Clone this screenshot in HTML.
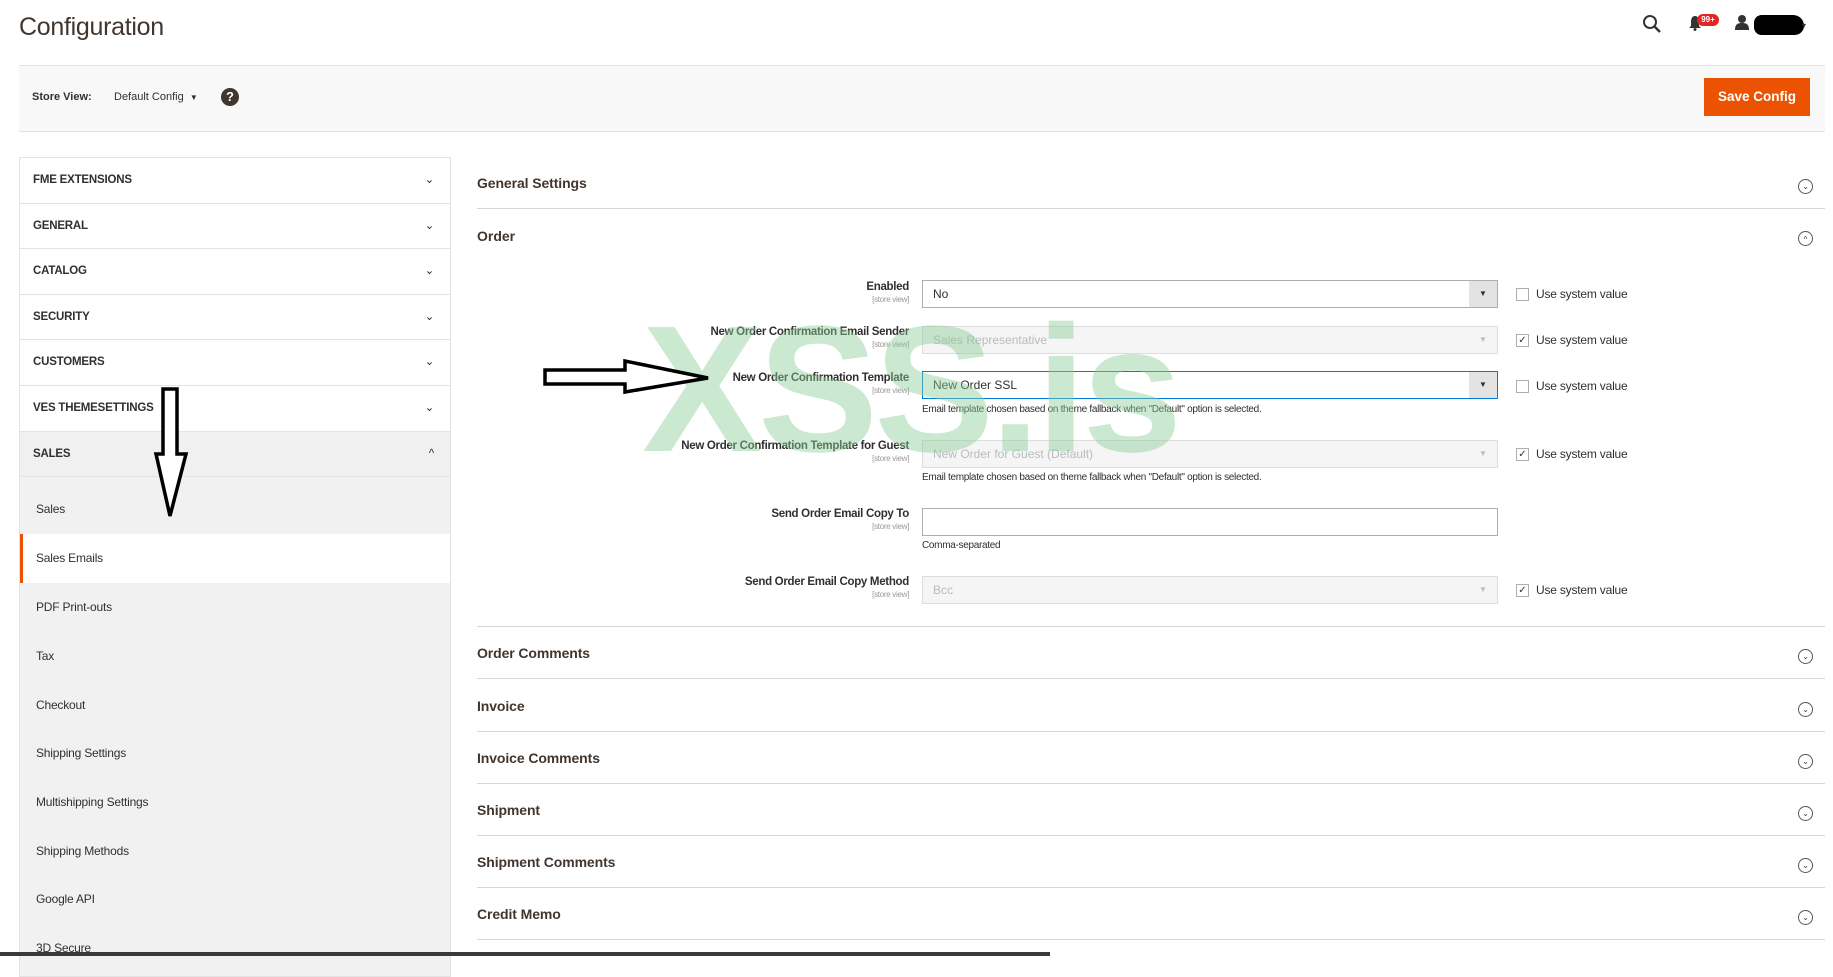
<!DOCTYPE html>
<html><head><meta charset="utf-8">
<style>
*{margin:0;padding:0;box-sizing:border-box}
body{width:1833px;height:956px;overflow:hidden;background:#fff;font-family:"Liberation Sans",sans-serif;color:#303030;position:relative}
.a{position:absolute}
.title{left:19px;top:13px;font-size:25px;color:#41362f;letter-spacing:-0.3px}
.bar{left:19px;top:65px;width:1806px;height:67px;background:#f8f8f8;border-top:1px solid #e3e3e3;border-bottom:1px solid #e3e3e3}
.save{left:1704px;top:78px;width:106px;height:38px;background:#eb5202;color:#fff;font-weight:bold;font-size:13.5px;text-align:center;line-height:38px}
.side{left:19px;top:157px;width:432px;height:820px;border:1px solid #e3e3e3;background:#f1f1f1}
.sh{height:45.6px;border-bottom:1px solid #e3e3e3;font-weight:bold;font-size:11.5px;padding-left:13px;line-height:45px;position:relative;color:#303030;letter-spacing:-0.2px;background:#fff}
.sh .ch{position:absolute;right:16px;top:0;font-weight:normal}
.si{height:48.7px;background:#f1f1f1;font-size:12px;padding-left:16px;line-height:48px;letter-spacing:-0.2px}
.sect{left:477px;width:1348px;border-bottom:1px solid #d6d6d6;height:52px;font-size:14px;font-weight:bold;color:#41362f;padding-top:18px;letter-spacing:-0.1px}
.circ{position:absolute;right:12px;top:22px;width:15px;height:15px;border:1px solid #555;border-radius:50%;font-size:8px;text-align:center;line-height:13px;font-weight:normal}
.lbl{right:924px;text-align:right;font-size:11.5px;font-weight:bold;color:#303030;letter-spacing:-0.3px}
.lbl small{display:block;font-size:8px;font-weight:normal;color:#999;margin-top:2px}
.inp{left:922px;width:576px;height:28px;border:1px solid #adadad;background:#fff;font-size:12px;line-height:26px;padding-left:10px}
.inp.dis{background:#f5f5f5;border-color:#ddd;color:#bbb}
.inp .dd{position:absolute;right:0;top:0;width:28px;height:26px;background:#e3e3e3;text-align:center;font-size:8px;color:#333}
.inp.dis .dd{background:#f5f5f5;color:#bbb}
.cb{left:1516px;width:13px;height:13px;border:1px solid #adadad;background:#fff;font-size:10px;line-height:11px;text-align:center}
.cbl{left:1536px;font-size:12px;letter-spacing:-0.2px}
.note{left:922px;font-size:10px;color:#303030;letter-spacing:-0.3px}
</style></head><body>
<div class="a title">Configuration</div>
<svg class="a" style="left:1642px;top:14px" width="20" height="20"><circle cx="8" cy="8" r="6" fill="none" stroke="#333" stroke-width="2"/><line x1="12" y1="12" x2="18" y2="18" stroke="#333" stroke-width="2.5"/></svg>
<svg class="a" style="left:1688px;top:15px" width="14" height="16"><path d="M7 1C4 1 3 4 3 7L3 11 1 13H13L11 11 11 7C11 4 10 1 7 1Z" fill="#333"/><circle cx="7" cy="14.5" r="1.5" fill="#333"/></svg>
<div class="a" style="left:1697px;top:14px;width:22px;height:12px;background:#e22626;border-radius:6px;color:#fff;font-size:8px;font-weight:bold;text-align:center;line-height:12px">99+</div>
<svg class="a" style="left:1734px;top:14px" width="16" height="16"><circle cx="8" cy="5" r="4" fill="#333"/><path d="M1 16C1 10 4 9 8 9S15 10 15 16Z" fill="#333"/></svg>
<div class="a" style="left:1754px;top:15px;width:50px;height:20px;background:#000;border-radius:10px 14px 12px 10px"></div>
<div class="a" style="left:1802px;top:21px;font-size:8px">▾</div>

<div class="a bar"></div>
<div class="a" style="left:32px;top:91px;font-size:11px;font-weight:bold">Store View:</div>
<div class="a" style="left:114px;top:91px;font-size:11px">Default Config &nbsp;<span style="font-size:8px">▼</span></div>
<div class="a" style="left:221px;top:88px;width:18px;height:18px;border-radius:50%;background:#41362f;color:#fff;font-weight:bold;font-size:13px;text-align:center;line-height:18px">?</div>
<div class="a save">Save Config</div>

<div class="a side">
<div class="sh">FME EXTENSIONS<span class="ch">⌄</span></div>
<div class="sh">GENERAL<span class="ch">⌄</span></div>
<div class="sh">CATALOG<span class="ch">⌄</span></div>
<div class="sh">SECURITY<span class="ch">⌄</span></div>
<div class="sh">CUSTOMERS<span class="ch">⌄</span></div>
<div class="sh">VES THEMESETTINGS<span class="ch">⌄</span></div>
<div class="sh" style="background:#f0f0f0">SALES<span class="ch">^</span></div>
<div class="si" style="height:57px;line-height:64px">Sales</div>
<div class="si" style="background:#fff;border-left:3px solid #eb5202;padding-left:13px;height:49px">Sales Emails</div>
<div class="si">PDF Print-outs</div>
<div class="si">Tax</div>
<div class="si">Checkout</div>
<div class="si">Shipping Settings</div>
<div class="si">Multishipping Settings</div>
<div class="si">Shipping Methods</div>
<div class="si">Google API</div>
<div class="si">3D Secure</div>
</div>
<div class="a" style="left:0;top:952px;width:1050px;height:4px;background:#3a3a3a"></div>

<div class="a sect" style="top:157px">General Settings<span class="circ">⌄</span></div>
<div class="a" style="left:477px;top:228px;font-size:14px;font-weight:bold;color:#41362f">Order</div>
<div class="a" style="left:1798px;top:231px;width:15px;height:15px;border:1px solid #555;border-radius:50%;font-size:8px;text-align:center;line-height:15px">^</div>

<div class="a lbl" style="top:281px">Enabled<small>[store view]</small></div>
<div class="a inp" style="top:280px">No<span class="dd">▼</span></div>
<div class="a cb" style="top:288px"></div><div class="a cbl" style="top:287px">Use system value</div>

<div class="a lbl" style="top:326px">New Order Confirmation Email Sender<small>[store view]</small></div>
<div class="a inp dis" style="top:326px">Sales Representative<span class="dd">▼</span></div>
<div class="a cb" style="top:334px">✓</div><div class="a cbl" style="top:333px">Use system value</div>

<div class="a lbl" style="top:372px">New Order Confirmation Template<small>[store view]</small></div>
<div class="a inp" style="top:371px;border-color:#007bdb">New Order SSL<span class="dd">▼</span></div>
<div class="a cb" style="top:380px"></div><div class="a cbl" style="top:379px">Use system value</div>
<div class="a note" style="top:404px">Email template chosen based on theme fallback when "Default" option is selected.</div>

<div class="a lbl" style="top:440px">New Order Confirmation Template for Guest<small>[store view]</small></div>
<div class="a inp dis" style="top:440px">New Order for Guest (Default)<span class="dd">▼</span></div>
<div class="a cb" style="top:448px">✓</div><div class="a cbl" style="top:447px">Use system value</div>
<div class="a note" style="top:472px">Email template chosen based on theme fallback when "Default" option is selected.</div>

<div class="a lbl" style="top:508px">Send Order Email Copy To<small>[store view]</small></div>
<div class="a inp" style="top:508px"></div>
<div class="a note" style="top:540px">Comma-separated</div>

<div class="a lbl" style="top:576px">Send Order Email Copy Method<small>[store view]</small></div>
<div class="a inp dis" style="top:576px">Bcc<span class="dd">▼</span></div>
<div class="a cb" style="top:584px">✓</div><div class="a cbl" style="top:583px">Use system value</div>

<div class="a" style="left:477px;top:626px;width:1348px;border-top:1px solid #d6d6d6"></div>
<div class="a sect" style="top:627px">Order Comments<span class="circ">⌄</span></div>
<div class="a sect" style="top:680px">Invoice<span class="circ">⌄</span></div>
<div class="a sect" style="top:732px">Invoice Comments<span class="circ">⌄</span></div>
<div class="a sect" style="top:784px">Shipment<span class="circ">⌄</span></div>
<div class="a sect" style="top:836px">Shipment Comments<span class="circ">⌄</span></div>
<div class="a sect" style="top:888px">Credit Memo<span class="circ">⌄</span></div>

<div class="a" style="left:642px;top:305px;font-size:180px;font-weight:bold;color:rgba(140,205,150,0.45);line-height:170px;letter-spacing:-4px">XSS.is</div>

<svg class="a" style="left:0;top:0" width="1833" height="956">
<polygon points="545,370 625,370 625,361 708,378 625,392 625,384 545,384" fill="#fff" stroke="#000" stroke-width="3.5"/>
<polygon points="163,389 177,389 177,454 186,454 170,516 156,454 163,454" fill="#fff" stroke="#000" stroke-width="3.5"/>
</svg>
</body></html>
